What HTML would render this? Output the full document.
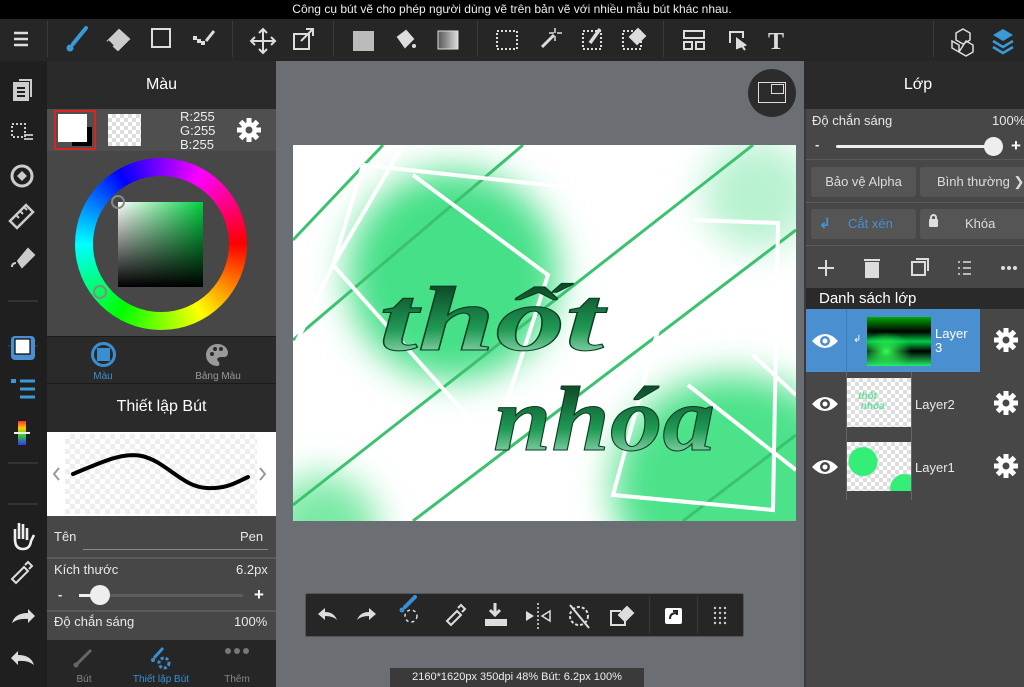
<!DOCTYPE html>
<html><head><meta charset="utf-8"><style>
*{margin:0;padding:0;box-sizing:border-box}
body{width:1024px;height:687px;overflow:hidden;background:#6b6e73;font-family:"Liberation Sans","Noto Sans CJK SC",sans-serif;color:#fff;position:relative}
.a{position:absolute}
.t{font-size:13px;color:#e8e8e8}
</style></head><body>
<div class="a" style="left:0;top:0;width:1024px;height:19px;background:#000;font-size:12px;text-align:center;line-height:18px;color:#eee">Công cụ bút vẽ cho phép người dùng vẽ trên bản vẽ với nhiều mẫu bút khác nhau.</div>
<div class="a" style="left:0;top:19px;width:1024px;height:42px;background:#262626"></div>
<div class="a" style="left:47px;top:21px;width:1px;height:36px;background:#3a3a3a"></div>
<div class="a" style="left:232px;top:21px;width:1px;height:36px;background:#3a3a3a"></div>
<div class="a" style="left:333px;top:21px;width:1px;height:36px;background:#3a3a3a"></div>
<div class="a" style="left:477px;top:21px;width:1px;height:36px;background:#3a3a3a"></div>
<div class="a" style="left:663px;top:21px;width:1px;height:36px;background:#3a3a3a"></div>
<div class="a" style="left:933px;top:21px;width:1px;height:36px;background:#3a3a3a"></div>
<svg class="a" style="left:0;top:19px" width="1024" height="42" fill="none" stroke="#ddd" stroke-width="2">
<path d="M14 14h14M14 20h14M14 26h14" stroke-width="2.4"/>
<path d="M86 9 L73 25" stroke="#3a9ad6" stroke-width="4" stroke-linecap="round"/><circle cx="70" cy="29" r="3.5" fill="#3a9ad6" stroke="none"/>
<path d="M108 22 L119 11 L129 20 L118 31 Z" fill="#ccc" stroke="#ccc"/><path d="M108 22 L113 27" stroke="#262626"/>
<rect x="152" y="10" width="18" height="18"/>
<path d="M193 17h4v4h-4zM201 22h4v4h-4zM197 20h4v4h-4z" fill="#ddd" stroke="none"/><path d="M206 22 L214 12" stroke-width="3"/>
<path d="M263 11v22M252 22h22M259 14l4-4 4 4M259 30l4 4 4-4M255 18l-4 4 4 4M271 18l4 4-4 4"/>
<rect x="294" y="15" width="15" height="15"/><path d="M301 22 L313 10M306 10h7v7"/>
<rect x="353" y="12" width="21" height="20" fill="#bbb" stroke="none"/>
<path d="M398 18 L406 12 L413 20 L405 28 Z" fill="#ddd"/><circle cx="414" cy="27" r="2" fill="#ddd" stroke="none"/>
<defs><linearGradient id="g1"><stop offset="0" stop-color="#555"/><stop offset="1" stop-color="#ddd"/></linearGradient></defs>
<rect x="438" y="12" width="20" height="18" fill="url(#g1)" stroke="#ddd" stroke-width="1"/>
<rect x="497" y="12" width="20" height="18" stroke-dasharray="2 2"/>
<path d="M542 28 L554 16" stroke-width="3"/><path d="M555 9v5M555 17v5M549 14h5M557 14h5" stroke-width="1.5"/>
<rect x="583" y="12" width="18" height="18" stroke-dasharray="2 2"/><path d="M590 24 L600 10" stroke-width="3.5"/>
<rect x="623" y="12" width="18" height="18" stroke-dasharray="2 2"/><path d="M630 18 L638 10 L645 17 L637 25 Z" fill="#ddd"/>
<rect x="684" y="12" width="20" height="7"/><path d="M684 23h8v7h-8zM696 23h8v7h-8z"/>
<path d="M730 24v-11h13v6" /><path d="M737 20 L745 31 M737 20l0 9l8-3z" fill="#ddd"/>
<text x="776" y="30" font-family="Liberation Serif" font-weight="bold" font-size="24" fill="#ddd" stroke="none" text-anchor="middle">T</text>
<path d="M956 14 l7-4 7 4 v7 l-7 4 -7-4z M952 22 l7 4 v7 l-7-4z M966 22 l7 4 v7 l-7 4 -7-4z" stroke-width="1.5"/>
<path d="M993 16 l10-6 10 6 -10 6z" fill="#3a9ad6" stroke="none"/><path d="M993 22 l10 6 10-6M993 28 l10 6 10-6" stroke="#3a9ad6" stroke-width="2.5"/>
</svg>
<div class="a" style="left:0;top:61px;width:47px;height:626px;background:#1f1f1f"></div>
<svg class="a" style="left:0;top:61px" width="47" height="626" fill="none" stroke="#ccc" stroke-width="2">
<rect x="14" y="22" width="14" height="17" fill="#ccc"/><path d="M17 27h8M17 31h8M17 35h8" stroke="#1f1f1f"/><path d="M19 19h12v17"/>
<rect x="12" y="63" width="13" height="13" stroke-dasharray="2 2"/><path d="M24 74h9M24 78h9" stroke-width="1.8"/>
<circle cx="22" cy="115" r="10" stroke-width="3"/><path d="M22 110l5 5-5 5-5-5z" fill="#ccc" stroke="none"/>
<path d="M10 160 L26 144 L33 151 L17 167 Z" stroke-width="2.5"/><path d="M16 154l3 3M20 150l3 3M24 146l3 3"/>
<path d="M18 200 L28 188 L34 194 L22 206 Z" fill="#ccc"/><path d="M12 206 q0-4 4-4" />
<path d="M8 240h30M8 285h30" stroke="#333"/>
<rect x="11" y="275" width="24" height="24" rx="4" fill="#4a90d0" stroke="none"/><rect x="15" y="278" width="15" height="15" fill="#fff" stroke="#000" stroke-width="1.2"/>
<rect x="11" y="318" width="5" height="4" fill="#3a9ad6" stroke="none"/><path d="M20 320h15M20 328h15M20 336h15" stroke="#3a9ad6" stroke-width="3"/>
<defs><linearGradient id="rb" x1="0" y1="0" x2="0" y2="1"><stop offset="0" stop-color="#f33"/><stop offset=".3" stop-color="#fc0"/><stop offset=".6" stop-color="#3c3"/><stop offset="1" stop-color="#33f"/></linearGradient></defs>
<rect x="18" y="360" width="8" height="24" fill="url(#rb)" stroke="none"/><path d="M14 372h16" stroke="#eee"/>
<path d="M8 402h30M8 443h30" stroke="#333"/>
<path d="M15 480v-12M19 478v-16M23 478v-15M27 479v-12M15 478 q0 10 8 10 q7 0 8-8 l3-6" stroke="#eee" stroke-width="2.6"/>
<path d="M12 518 L24 506 L28 510 L16 522 Z M25 504 l3-3 4 4-3 3" stroke="#ddd"/>
<path d="M12 562 q3-10 16-10 v-4 l7 7-7 7v-4 q-10-1-16 4z" fill="#ddd" stroke="none"/>
<path d="M34 604 q-3-10 -16-10 v-4 l-7 7 7 7v-4 q10-1 16 4z" fill="#ddd" stroke="none"/>
</svg>
<div class="a" style="left:47px;top:61px;width:229px;height:626px;background:#2a2a2a"></div>
<div class="a" style="left:47px;top:76px;width:229px;text-align:center;font-size:16px">Màu</div>
<div class="a" style="left:47px;top:109px;width:229px;height:42px;background:#4f4f4f"></div>
<div class="a" style="left:54px;top:110px;width:42px;height:40px;border:2px solid #d22;border-radius:2px"></div>
<div class="a" style="left:72px;top:127px;width:20px;height:19px;background:#000"></div>
<div class="a" style="left:58px;top:114px;width:29px;height:28px;background:#fff"></div>
<div class="a" style="left:108px;top:114px;width:33px;height:32px;background:repeating-conic-gradient(#ddd 0 25%,#fff 0 50%) 0 0/8px 8px"></div>
<div class="a" style="left:180px;top:110px;font-size:13px;line-height:14px;color:#eee">R:255<br>G:255<br>B:255</div>
<svg class="a" style="left:236px;top:117px" width="26" height="26" viewBox="-13 -13 26 26"><g fill="#fff"><circle r="8"/><rect x="-2.5" y="-12" width="5" height="24"/><rect x="-2.5" y="-12" width="5" height="24" transform="rotate(45)"/><rect x="-2.5" y="-12" width="5" height="24" transform="rotate(90)"/><rect x="-2.5" y="-12" width="5" height="24" transform="rotate(135)"/></g><circle r="3.5" fill="#4f4f4f"/></svg>
<div class="a" style="left:47px;top:151px;width:229px;height:185px;background:#474747"></div>
<div class="a" style="left:75px;top:158px;width:172px;height:172px;border-radius:50%;background:conic-gradient(from 90deg,#f00,#ff0,#0f0,#0ff,#00f,#f0f,#f00)"></div>
<div class="a" style="left:93px;top:176px;width:136px;height:136px;border-radius:50%;background:#474747"></div>
<div class="a" style="left:118px;top:202px;width:85px;height:85px;background:linear-gradient(to bottom,transparent,#000),linear-gradient(to right,#fff,#00d040)"></div>
<div class="a" style="left:111px;top:195px;width:14px;height:14px;border-radius:50%;border:2px solid #888"></div>
<div class="a" style="left:93px;top:285px;width:14px;height:14px;border-radius:50%;border:2px solid #888"></div>
<div class="a" style="left:47px;top:336px;width:229px;height:1px;background:#1a1a1a"></div>
<div class="a" style="left:91px;top:342px;width:25px;height:25px;border-radius:50%;border:3px solid #3a8fd0"></div>
<div class="a" style="left:97px;top:348px;width:13px;height:13px;background:#3a8fd0"></div>
<div class="a" style="left:47px;top:371px;width:112px;text-align:center;font-size:10px;color:#3a8fd0">Màu</div>
<svg class="a" style="left:204px;top:342px" width="26" height="26"><path d="M13 2 a11 11 0 1 0 0 22 c3 0 3-3 1-5 c-2-2 0-4 3-4 h3 c3 0 4-2 4-5 c-1-5-5-8-11-8z" fill="#999"/><circle cx="8" cy="12" r="2" fill="#2a2a2a"/><circle cx="11" cy="7" r="2" fill="#2a2a2a"/><circle cx="17" cy="7" r="2" fill="#2a2a2a"/></svg>
<div class="a" style="left:162px;top:371px;width:112px;text-align:center;font-size:10px;color:#999">Bảng Màu</div>
<div class="a" style="left:47px;top:383px;width:229px;height:1px;background:#1a1a1a"></div>
<div class="a" style="left:47px;top:398px;width:229px;text-align:center;font-size:16px">Thiết lập Bút</div>
<div class="a" style="left:47px;top:432px;width:229px;height:84px;background:#fff"></div>
<div class="a" style="left:65px;top:434px;width:192px;height:80px;background:repeating-conic-gradient(#eee 0 25%,#fff 0 50%) 0 0/10px 10px"></div>
<svg class="a" style="left:47px;top:432px" width="229" height="84" fill="none"><path d="M26 42 C55 30 75 20 95 24 C120 30 135 55 160 56 C180 57 190 50 201 45" stroke="#000" stroke-width="4" stroke-linecap="round"/><path d="M12 36l-5 6 5 6M213 36l5 6-5 6" stroke="#999" stroke-width="2"/></svg>
<div class="a" style="left:47px;top:516px;width:229px;height:124px;background:#474747"></div>
<div class="a t" style="left:54px;top:529px">Tên</div><div class="a t" style="left:240px;top:529px">Pen</div>
<div class="a" style="left:83px;top:549px;width:185px;height:1px;background:#888"></div>
<div class="a" style="left:47px;top:557px;width:229px;height:2px;background:#5a5a5a"></div>
<div class="a t" style="left:54px;top:562px">Kích thước</div><div class="a t" style="left:236px;top:562px">6.2px</div>
<div class="a t" style="left:58px;top:587px;font-weight:bold">-</div>
<div class="a" style="left:79px;top:594px;width:164px;height:3px;background:#5e5e5e;border-radius:2px"></div>
<div class="a" style="left:79px;top:594px;width:20px;height:3px;background:#eee"></div>
<div class="a" style="left:90px;top:585px;width:20px;height:20px;border-radius:50%;background:#eee"></div>
<div class="a" style="left:254px;top:585px;font-size:17px;font-weight:bold">+</div>
<div class="a" style="left:47px;top:610px;width:229px;height:2px;background:#5a5a5a"></div>
<div class="a t" style="left:54px;top:614px">Độ chắn sáng</div><div class="a t" style="left:234px;top:614px">100%</div>
<div class="a" style="left:47px;top:640px;width:229px;height:47px;background:#262626"></div>
<svg class="a" style="left:47px;top:644px" width="229" height="26" fill="none"><path d="M30 20 L44 6" stroke="#666" stroke-width="3"/><circle cx="29" cy="21" r="2.5" fill="#666"/><path d="M107 14 L116 4" stroke="#3a8fd0" stroke-width="3"/><circle cx="106" cy="16" r="2" fill="#3a8fd0"/><circle cx="117" cy="19" r="5" stroke="#3a8fd0" stroke-width="3" stroke-dasharray="3 2"/><circle cx="181" cy="7" r="3" fill="#777"/><circle cx="190" cy="7" r="3" fill="#777"/><circle cx="199" cy="7" r="3" fill="#777"/></svg>
<div class="a" style="left:60px;top:674px;width:48px;text-align:center;font-size:10px;color:#888">Bút</div>
<div class="a" style="left:124px;top:674px;width:74px;text-align:center;font-size:10px;color:#3a8fd0">Thiết lập Bút</div>
<div class="a" style="left:214px;top:674px;width:46px;text-align:center;font-size:10px;color:#888">Thêm</div>
<div class="a" style="left:748px;top:69px;width:48px;height:48px;border-radius:50%;background:#2c2c2c"></div>
<div class="a" style="left:758px;top:82px;width:28px;height:21px;border:1.5px solid #ddd"></div>
<div class="a" style="left:771px;top:84px;width:13px;height:10px;border:1.5px solid #ddd"></div>
<svg class="a" style="left:293px;top:145px" width="503" height="376" viewBox="0 0 503 376">
<defs>
<filter id="bl" x="-50%" y="-50%" width="200%" height="200%"><feGaussianBlur stdDeviation="18"/></filter>
<linearGradient id="tg" x1="0" y1="0" x2="0" y2="1"><stop offset="0" stop-color="#062a15"/><stop offset=".6" stop-color="#1f9a55"/><stop offset="1" stop-color="#c8f7dc"/></linearGradient>
</defs>
<rect width="503" height="376" fill="#fff"/>
<circle cx="160" cy="130" r="105" fill="#45e087" filter="url(#bl)"/>
<circle cx="465" cy="50" r="55" fill="#b8f2d0" filter="url(#bl)"/>
<ellipse cx="440" cy="340" rx="120" ry="110" fill="#4be28a" filter="url(#bl)"/>
<circle cx="30" cy="385" r="55" fill="#7ae9a6" filter="url(#bl)"/>
<g stroke="#3cc26e" stroke-width="3">
<path d="M0 95 L90 0"/><path d="M0 195 L230 0"/><path d="M0 360 L460 0"/><path d="M120 376 L503 85"/><path d="M390 376 L503 290"/>
</g>
<g stroke="#fff" stroke-width="4" fill="none">
<path d="M70 20 L300 45 M120 30 L255 130 L200 300 L40 120 L70 20 M40 120 L-5 215 M110 0 L40 120"/>
<path d="M400 75 L485 78 L480 365 L320 350 L380 130 M395 240 L503 325 M460 210 L503 250"/>
</g>
<text x="86" y="205" textLength="225" lengthAdjust="spacingAndGlyphs" font-family="Liberation Serif" font-style="italic" font-weight="bold" font-size="92" fill="url(#tg)" stroke="#0c3a20" stroke-width="1">thốt</text>
<text x="200" y="305" textLength="222" lengthAdjust="spacingAndGlyphs" font-family="Liberation Serif" font-style="italic" font-weight="bold" font-size="92" fill="url(#tg)" stroke="#0c3a20" stroke-width="1">nhóa</text>
</svg>
<div class="a" style="left:305px;top:593px;width:439px;height:44px;background:#262626;border:1px solid #555;border-radius:2px"></div>
<div class="a" style="left:649px;top:596px;width:1px;height:38px;background:#3a3a3a"></div>
<div class="a" style="left:697px;top:596px;width:1px;height:38px;background:#3a3a3a"></div>
<svg class="a" style="left:305px;top:593px" width="439" height="44" fill="none" stroke="#ddd" stroke-width="2">
<path d="M32 27 q-3-8 -12-8 v-4 l-7 6 7 6v-4 q8 0 12 4z" fill="#ddd" stroke="none"/>
<path d="M52 27 q3-8 12-8 v-4 l7 6 -7 6v-4 q-8 0 -12 4z" fill="#ddd" stroke="none"/>
<path d="M100 14 L110 4" stroke="#3a8fd0" stroke-width="4" stroke-linecap="round"/><circle cx="97" cy="17" r="2.5" fill="#3a8fd0" stroke="none"/><circle cx="106" cy="23" r="6" stroke-dasharray="3 3" stroke-width="1.5"/>
<path d="M142 28 L152 18 L156 22 L146 32 Z M153 15 l3-3 4 4-3 3"/>
<path d="M190 10v11M185 17l5 5 5-5" stroke-width="3"/><rect x="180" y="26" width="22" height="7" fill="#ddd" stroke="none"/>
<path d="M233 10v26" stroke-dasharray="2 2" stroke-width="1.5"/><path d="M221 18l8 5-8 5z" fill="#ddd" stroke="none"/><path d="M245 18l-8 5 8 5z" stroke-width="1.5"/>
<circle cx="274" cy="23" r="9" stroke-dasharray="3 2"/><path d="M265 12 L284 35"/>
<path d="M316 18h-10v14h14v-8"/><path d="M314 22 L322 14 L328 20 L320 28 Z" fill="#ddd"/>
<rect x="360" y="15" width="17" height="16" rx="2" fill="#fff" stroke="none"/><path d="M365 26 q0-6 6-6 M368 18h4v4" stroke="#262626"/>
<g fill="#ccc" stroke="none"><circle cx="410" cy="15" r="1.2"/><circle cx="415" cy="15" r="1.2"/><circle cx="420" cy="15" r="1.2"/><circle cx="410" cy="20" r="1.2"/><circle cx="415" cy="20" r="1.2"/><circle cx="420" cy="20" r="1.2"/><circle cx="410" cy="25" r="1.2"/><circle cx="415" cy="25" r="1.2"/><circle cx="420" cy="25" r="1.2"/><circle cx="410" cy="30" r="1.2"/><circle cx="415" cy="30" r="1.2"/><circle cx="420" cy="30" r="1.2"/></g>
</svg>
<div class="a" style="left:390px;top:668px;width:254px;height:19px;background:#3a3a3a;font-size:11px;text-align:center;line-height:19px;color:#eee">2160*1620px 350dpi 48% Bút: 6.2px 100%</div>
<div class="a" style="left:804px;top:61px;width:220px;height:626px;background:#474747;border-left:2px solid #3a3a3a"></div>
<div class="a" style="left:804px;top:61px;width:220px;height:48px;background:#2a2a2a"></div>
<div class="a" style="left:804px;top:76px;width:228px;text-align:center;font-size:16px">Lớp</div>
<div class="a t" style="left:812px;top:113px">Độ chắn sáng</div><div class="a t" style="left:992px;top:113px">100%</div>
<div class="a t" style="left:815px;top:137px;font-weight:bold">-</div>
<div class="a" style="left:836px;top:145px;width:160px;height:3px;background:#eee;border-radius:2px"></div>
<div class="a" style="left:984px;top:137px;width:19px;height:19px;border-radius:50%;background:#eee"></div>
<div class="a" style="left:1011px;top:136px;font-size:17px;font-weight:bold">+</div>
<div class="a" style="left:806px;top:159px;width:218px;height:1px;background:#5a5a5a"></div>
<div class="a" style="left:811px;top:167px;width:105px;height:30px;background:#555;border-radius:3px;font-size:13px;text-align:center;line-height:30px;color:#ddd">Bảo vệ Alpha</div>
<div class="a" style="left:920px;top:167px;width:110px;height:30px;background:#555;border-radius:3px;font-size:13px;line-height:30px;color:#ddd;padding-left:17px">Bình thường ❯</div>
<div class="a" style="left:806px;top:202px;width:218px;height:1px;background:#5a5a5a"></div>
<div class="a" style="left:811px;top:209px;width:105px;height:30px;background:#555;border-radius:3px;font-size:13px;line-height:30px;color:#4a8fd0;padding-left:37px">Cắt xén</div>
<div class="a" style="left:819px;top:215px;color:#4a8fd0;font-size:14px;font-weight:bold">↲</div>
<div class="a" style="left:920px;top:209px;width:110px;height:30px;background:#555;border-radius:3px;font-size:13px;line-height:30px;color:#ddd;padding-left:45px">Khóa</div>
<div class="a" style="left:929px;top:219px;width:9px;height:8px;background:#ddd;border-radius:1px"></div>
<div class="a" style="left:930px;top:214px;width:7px;height:7px;border:2px solid #ddd;border-radius:4px 4px 0 0"></div>
<div class="a" style="left:806px;top:245px;width:218px;height:1px;background:#5a5a5a"></div>
<svg class="a" style="left:806px;top:250px" width="218" height="36" fill="none" stroke="#ddd" stroke-width="2">
<path d="M20 10v16M12 18h16"/>
<rect x="60" y="13" width="12" height="14" fill="#ddd"/><path d="M58 10h16"/>
<rect x="106" y="12" width="13" height="13"/><path d="M110 9h12v12"/>
<path d="M152 12h2M152 18h2M152 24h2M157 12h8M157 18h8M157 24h8" stroke-width="1.5"/>
<g fill="#ddd" stroke="none"><circle cx="197" cy="18" r="2"/><circle cx="203" cy="18" r="2"/><circle cx="209" cy="18" r="2"/></g>
</svg>
<div class="a" style="left:806px;top:288px;width:218px;height:21px;background:#2a2a2a;font-size:15px;padding-left:13px;line-height:21px">Danh sách lớp</div>
<div class="a" style="left:806px;top:309px;width:174px;height:63px;background:#4a8fd0"></div>
<div class="a" style="left:846px;top:309px;width:1px;height:63px;background:#3d7bb5"></div>
<div class="a" style="left:867px;top:317px;width:64px;height:49px;background:radial-gradient(ellipse at 30% 70%,#3f5 0,transparent 40%),linear-gradient(#0a0 0,#000 30%,#0c4 50%,#000 70%,#2e6 100%)"></div>
<div class="a" style="left:935px;top:327px;font-size:13px;line-height:14px">Layer<br>3</div>
<div class="a" style="left:853px;top:334px;font-size:10px">↲</div>
<div class="a" style="left:847px;top:378px;width:64px;height:49px;background:repeating-conic-gradient(#ddd 0 25%,#fff 0 50%) 0 0/8px 8px"></div>
<div class="a" style="left:858px;top:392px;font-size:10px;color:#6d9;font-style:italic;font-weight:bold;line-height:10px">thốt<br>&nbsp;nhóa</div>
<div class="a t" style="left:915px;top:397px">Layer2</div>
<div class="a" style="left:847px;top:442px;width:64px;height:49px;background:radial-gradient(circle at 25% 40%,#3e7 0 14px,transparent 15px),radial-gradient(circle at 90% 95%,#3e7 0 14px,transparent 15px),repeating-conic-gradient(#ddd 0 25%,#fff 0 50%) 0 0/8px 8px"></div>
<div class="a t" style="left:915px;top:460px">Layer1</div>
<div class="a" style="left:846px;top:372px;width:1px;height:128px;background:#666"></div>
<div class="a" style="left:911px;top:372px;width:1px;height:128px;background:#666"></div>
<svg class="a" style="left:806px;top:309px" width="218" height="192">
<g><path d="M6 32 q13-14 26 0 q-13 14 -26 0z" fill="#fff"/><circle cx="19" cy="32" r="5" fill="#4a8fd0"/><circle cx="19" cy="32" r="2.5" fill="#fff"/></g>
<g transform="translate(0,63)"><path d="M6 32 q13-14 26 0 q-13 14 -26 0z" fill="#fff"/><circle cx="19" cy="32" r="5" fill="#474747"/><circle cx="19" cy="32" r="2.5" fill="#fff"/></g>
<g transform="translate(0,126)"><path d="M6 32 q13-14 26 0 q-13 14 -26 0z" fill="#fff"/><circle cx="19" cy="32" r="5" fill="#474747"/><circle cx="19" cy="32" r="2.5" fill="#fff"/></g>
<g fill="#fff">
<g transform="translate(200,31)"><circle r="8"/><rect x="-2.5" y="-12" width="5" height="24"/><rect x="-2.5" y="-12" width="5" height="24" transform="rotate(45)"/><rect x="-2.5" y="-12" width="5" height="24" transform="rotate(90)"/><rect x="-2.5" y="-12" width="5" height="24" transform="rotate(135)"/><circle r="3.5" fill="#474747"/></g>
<g transform="translate(200,94)"><circle r="8"/><rect x="-2.5" y="-12" width="5" height="24"/><rect x="-2.5" y="-12" width="5" height="24" transform="rotate(45)"/><rect x="-2.5" y="-12" width="5" height="24" transform="rotate(90)"/><rect x="-2.5" y="-12" width="5" height="24" transform="rotate(135)"/><circle r="3.5" fill="#474747"/></g>
<g transform="translate(200,157)"><circle r="8"/><rect x="-2.5" y="-12" width="5" height="24"/><rect x="-2.5" y="-12" width="5" height="24" transform="rotate(45)"/><rect x="-2.5" y="-12" width="5" height="24" transform="rotate(90)"/><rect x="-2.5" y="-12" width="5" height="24" transform="rotate(135)"/><circle r="3.5" fill="#474747"/></g>
</g>
</svg>
</body></html>
